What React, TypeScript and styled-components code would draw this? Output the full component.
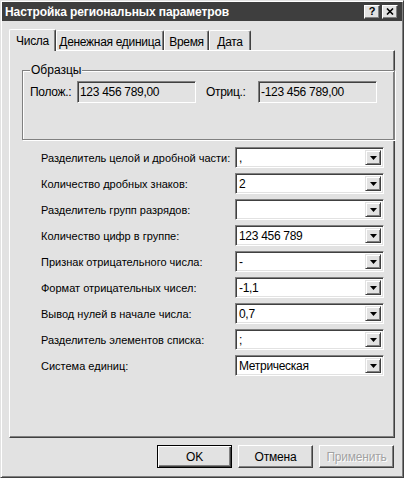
import React from 'react';
import styled, { createGlobalStyle } from 'styled-components';

const FACE = '#e2e2e2';
const SHADOW = '#808080';
const DARK = '#404040';

const GlobalStyle = createGlobalStyle`
  html, body {
    margin: 0;
    padding: 0;
    background: ${FACE};
  }
  body {
    font-family: "Liberation Sans", Arial, sans-serif;
    font-size: 11px;
    color: #000;
  }
`;

const Window = styled.div`
  width: 404px;
  height: 478px;
  box-sizing: border-box;
  background: ${FACE};
  border: 1px solid;
  border-color: ${FACE} ${DARK} ${DARK} ${FACE};
  box-shadow: inset 1px 1px 0 #fff, inset -1px -1px 0 ${SHADOW};
  padding: 1px;
  display: flex;
  flex-direction: column;
`;

const TitleBar = styled.div`
  height: 19px;
  background: #3e3e3e;
  display: flex;
  align-items: center;
  padding: 0 4px 0 3px;
`;

const Title = styled.div`
  color: #fff;
  font-weight: bold;
  font-size: 12px;
  letter-spacing: -0.1px;
  flex: 1;
  white-space: nowrap;
`;

const CaptionButtons = styled.div`
  display: flex;
  gap: 2px;
`;

const CaptionButton = styled.div`
  width: 16px;
  height: 14px;
  box-sizing: border-box;
  background: ${FACE};
  border: 1px solid;
  border-color: #fff ${DARK} ${DARK} #fff;
  box-shadow: inset -1px -1px 0 ${SHADOW};
  display: flex;
  align-items: center;
  justify-content: center;
  font-weight: bold;
  font-size: 11px;
  line-height: 1;
`;

const Body = styled.div`
  flex: 1;
  display: flex;
  flex-direction: column;
  padding: 7px 7px 8px 7px;
`;

const TabRow = styled.div`
  display: flex;
  align-items: flex-end;
  height: 22px;
`;

const Tab = styled.div<{ $active?: boolean; $w: number }>`
  width: ${(p) => p.$w}px;
  height: ${(p) => (p.$active ? 22 : 20)}px;
  box-sizing: border-box;
  background: ${FACE};
  border-top: 1px solid #fff;
  border-left: 1px solid #fff;
  border-right: 1px solid ${DARK};
  box-shadow: inset -1px 0 0 ${SHADOW};
  border-radius: 2px 2px 0 0;
  display: flex;
  align-items: center;
  justify-content: center;
  padding-top: ${(p) => (p.$active ? 0 : 2)}px;
  margin-bottom: ${(p) => (p.$active ? -1 : 0)}px;
  position: relative;
  z-index: ${(p) => (p.$active ? 2 : 1)};
  white-space: nowrap;
  font-size: 12px;
  letter-spacing: -0.3px;
`;

const Panel = styled.div`
  flex: 1;
  box-sizing: border-box;
  border: 1px solid;
  border-color: #fff ${DARK} ${DARK} #fff;
  box-shadow: inset -1px -1px 0 ${SHADOW};
  padding: 12px 12px 0 12px;
  display: flex;
  flex-direction: column;
`;

const Group = styled.fieldset`
  margin: 0;
  height: 77px;
  box-sizing: border-box;
  border: 1px solid ${SHADOW};
  box-shadow: inset 1px 1px 0 #fff, 1px 1px 0 #fff;
  padding: 0 7px 0 7px;
  display: flex;
  align-items: flex-start;
  align-self: stretch;
`;

const Legend = styled.legend`
  padding: 0 1px;
  margin-left: 0;
  background: ${FACE};
  font-size: 12px;
`;

const SampleRow = styled.div`
  display: flex;
  align-items: center;
  margin-top: 4px;
`;

const SampleLabel = styled.span<{ $w: number }>`
  width: ${(p) => p.$w}px;
  font-size: 12px;
  letter-spacing: -0.3px;
`;

const SampleBox = styled.div`
  width: 119px;
  height: 22px;
  box-sizing: border-box;
  border: 1px solid;
  border-color: ${SHADOW} #fff #fff ${SHADOW};
  box-shadow: inset 1px 1px 0 ${DARK}, inset -1px -1px 0 ${FACE};
  padding: 3px 0 0 2px;
  white-space: nowrap;
  margin-right: 10px;
  font-size: 12px;
  letter-spacing: -0.3px;
`;

const Form = styled.div`
  display: grid;
  grid-template-columns: 194px 149px;
  row-gap: 5px;
  align-items: center;
  margin-top: 7px;
  padding-left: 19px;
`;

const FieldLabel = styled.span`
  white-space: nowrap;
  font-size: 11px;
`;

const Combo = styled.div`
  height: 21px;
  box-sizing: border-box;
  background: #fff;
  border: 1px solid;
  border-color: ${SHADOW} #fff #fff ${SHADOW};
  box-shadow: inset 1px 1px 0 ${DARK}, inset -1px -1px 0 ${FACE};
  display: flex;
  align-items: stretch;
  padding: 2px;
`;

const ComboText = styled.div`
  flex: 1;
  padding-left: 1px;
  display: flex;
  align-items: center;
  white-space: nowrap;
  font-size: 12px;
  letter-spacing: -0.3px;
`;

const DropButton = styled.div`
  width: 16px;
  box-sizing: border-box;
  background: ${FACE};
  border: 1px solid;
  border-color: ${FACE} ${DARK} ${DARK} ${FACE};
  box-shadow: inset 1px 1px 0 #fff, inset -1px -1px 0 ${SHADOW};
  display: flex;
  align-items: center;
  justify-content: center;
`;

const ButtonRow = styled.div`
  display: flex;
  justify-content: flex-end;
  gap: 6px;
  margin-top: 7px;
  padding-right: 1px;
`;

const Button = styled.div<{ $default?: boolean; $disabled?: boolean }>`
  width: 75px;
  height: 23px;
  box-sizing: border-box;
  background: ${FACE};
  border: 1px solid;
  border-color: ${(p) => (p.$default ? '#000' : `#fff ${DARK} ${DARK} #fff`)};
  box-shadow: ${(p) =>
    p.$default
      ? `inset 1px 1px 0 #fff, inset -1px -1px 0 ${DARK}, inset -2px -2px 0 ${SHADOW}`
      : `inset -1px -1px 0 ${SHADOW}`};
  display: flex;
  align-items: center;
  justify-content: center;
  font-size: 12px;
  letter-spacing: -0.2px;
  color: ${(p) => (p.$disabled ? '#a2a2a2' : '#000')};
  text-shadow: ${(p) => (p.$disabled ? '1px 1px 0 #fff' : 'none')};
`;

const Arrow = () => (
  <svg width="7" height="4" viewBox="0 0 7 4">
    <path d="M0 0H7L3.5 4Z" fill="#000" />
  </svg>
);

const CloseGlyph = () => (
  <svg width="8" height="7" viewBox="0 0 8 7">
    <path d="M1 0.5L7 6.5M7 0.5L1 6.5" stroke="#000" strokeWidth="1.6" />
  </svg>
);

const tabs = [
  { label: 'Числа', w: 47, active: true },
  { label: 'Денежная единица', w: 108 },
  { label: 'Время', w: 45 },
  { label: 'Дата', w: 42 },
];

const fields = [
  { label: 'Разделитель целой и дробной части:', value: ',' },
  { label: 'Количество дробных знаков:', value: '2' },
  { label: 'Разделитель групп разрядов:', value: '' },
  { label: 'Количество цифр в группе:', value: '123 456 789' },
  { label: 'Признак отрицательного числа:', value: '-' },
  { label: 'Формат отрицательных чисел:', value: '-1,1' },
  { label: 'Вывод нулей в начале числа:', value: '0,7' },
  { label: 'Разделитель элементов списка:', value: ';' },
  { label: 'Система единиц:', value: 'Метрическая' },
];

export default function App() {
  return (
    <Window>
      <GlobalStyle />
      <TitleBar>
        <Title>Настройка региональных параметров</Title>
        <CaptionButtons>
          <CaptionButton>?</CaptionButton>
          <CaptionButton>
            <CloseGlyph />
          </CaptionButton>
        </CaptionButtons>
      </TitleBar>
      <Body>
        <TabRow>
          {tabs.map((t) => (
            <Tab key={t.label} $active={t.active} $w={t.w}>
              {t.label}
            </Tab>
          ))}
        </TabRow>
        <Panel>
          <Group>
            <Legend>Образцы</Legend>
            <SampleRow>
              <SampleLabel $w={47}>Полож.:</SampleLabel>
              <SampleBox>123 456 789,00</SampleBox>
              <SampleLabel $w={52}>Отриц.:</SampleLabel>
              <SampleBox>-123 456 789,00</SampleBox>
            </SampleRow>
          </Group>
          <Form>
            {fields.map((f) => (
              <React.Fragment key={f.label}>
                <FieldLabel>{f.label}</FieldLabel>
                <Combo>
                  <ComboText>{f.value}</ComboText>
                  <DropButton>
                    <Arrow />
                  </DropButton>
                </Combo>
              </React.Fragment>
            ))}
          </Form>
        </Panel>
        <ButtonRow>
          <Button $default>OK</Button>
          <Button>Отмена</Button>
          <Button $disabled>Применить</Button>
        </ButtonRow>
      </Body>
    </Window>
  );
}
